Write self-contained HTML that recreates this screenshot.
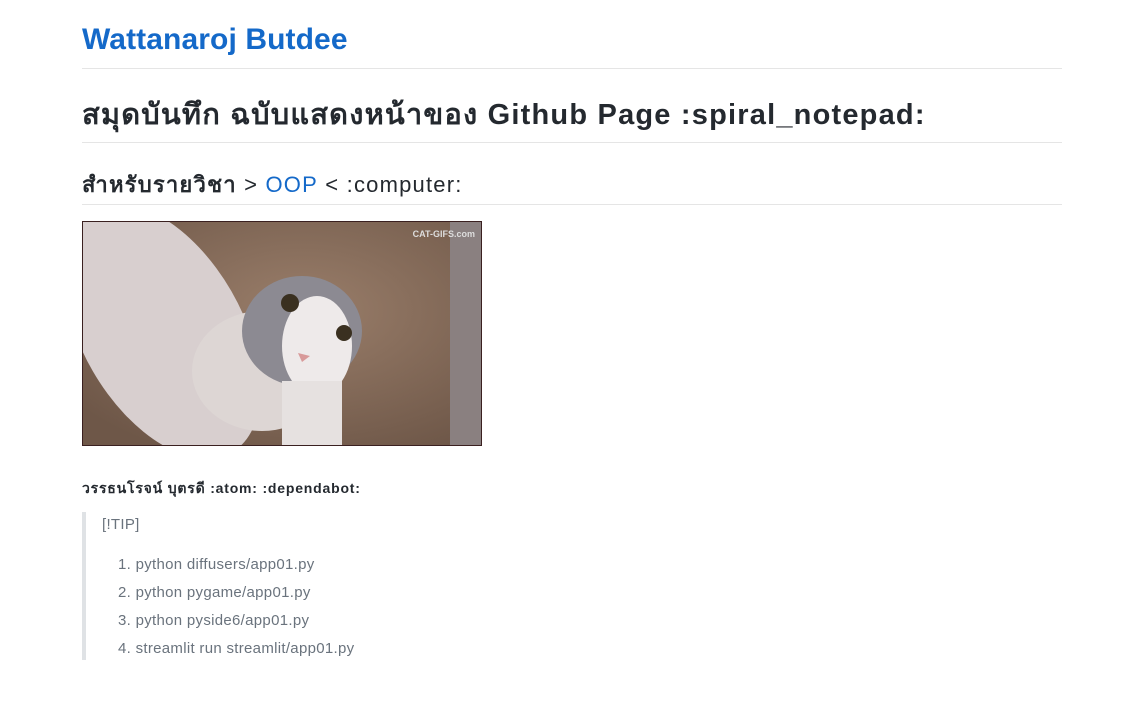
<!DOCTYPE html>
<html><head><meta charset="utf-8"><style>
body{margin:0;background:#fff;font-family:"Liberation Sans","DejaVu Sans",sans-serif;color:#24292f}
.w{position:absolute;left:82px;width:980px}
.t{top:20px;font-size:30px;color:#1469c9;font-weight:bold;line-height:40px;border-bottom:1px solid #e5e5e5;height:48px;letter-spacing:0.1px}
.h1{top:95px;font-size:29px;font-weight:bold;line-height:40px;height:47px;border-bottom:1px solid #e5e5e5;letter-spacing:1.2px}
.h2{top:170px;font-size:22px;font-weight:bold;line-height:30px;height:34px;border-bottom:1px solid #e5e5e5;letter-spacing:1.2px}
.h2 a{color:#1469c9;font-weight:normal;text-decoration:none}
.img{top:221px;width:400px;height:225px}
.p{top:478px;font-size:14px;font-weight:bold;line-height:20px;letter-spacing:0.8px}
.bq{top:512px;height:148px;border-left:4px solid #dfe2e5;width:900px;color:#6a737d;font-size:15px;letter-spacing:0.3px}
.bq div{position:absolute;left:16px}
</style></head><body>
<div class="w t">Wattanaroj Butdee</div>
<div class="w h1">สมุดบันทึก ฉบับแสดงหน้าของ Github Page :spiral_notepad:</div>
<div class="w h2">สำหรับรายวิชา <span style="font-weight:normal">&gt;</span> <a>OOP</a> <span style="font-weight:normal">&lt; :computer:</span></div>
<svg class="w img" viewBox="0 0 400 225">
<defs><radialGradient id="g" cx="0.55" cy="0.4" r="0.7"><stop offset="0" stop-color="#9a7e6a"/><stop offset="1" stop-color="#6e5748"/></radialGradient></defs>
<rect width="400" height="225" fill="url(#g)"/>
<rect x="368" y="0" width="32" height="225" fill="#8a8080"/>
<ellipse cx="80" cy="110" rx="80" ry="140" fill="#d8cfcf" transform="rotate(-30 80 110)"/>
<ellipse cx="180" cy="150" rx="70" ry="60" fill="#ddd6d4"/>
<ellipse cx="220" cy="110" rx="60" ry="55" fill="#8c8a92"/>
<ellipse cx="235" cy="125" rx="35" ry="50" fill="#eeeaea"/>
<rect x="200" y="160" width="60" height="65" fill="#e6e1e0"/>
<circle cx="208" cy="82" r="9" fill="#3a3020"/><circle cx="262" cy="112" r="8" fill="#3a3020"/>
<path d="M216 132l12 3-8 6z" fill="#d89a9a"/>
<rect x="0" y="0" width="400" height="225" fill="none" stroke="#3a2020" stroke-width="2"/>
<text x="393" y="16" text-anchor="end" font-size="9" font-weight="bold" fill="#ddd" font-family="Liberation Sans">CAT-GIFS.com</text>
</svg>
<div class="w p">วรรธนโรจน์ บุตรดี :atom: :dependabot:</div>
<div class="w bq">
<div style="top:4px">[!TIP]</div>
<div style="top:44px;left:32px">1. python diffusers/app01.py</div>
<div style="top:72px;left:32px">2. python pygame/app01.py</div>
<div style="top:100px;left:32px">3. python pyside6/app01.py</div>
<div style="top:128px;left:32px">4. streamlit run streamlit/app01.py</div>
</div>
</body></html>
